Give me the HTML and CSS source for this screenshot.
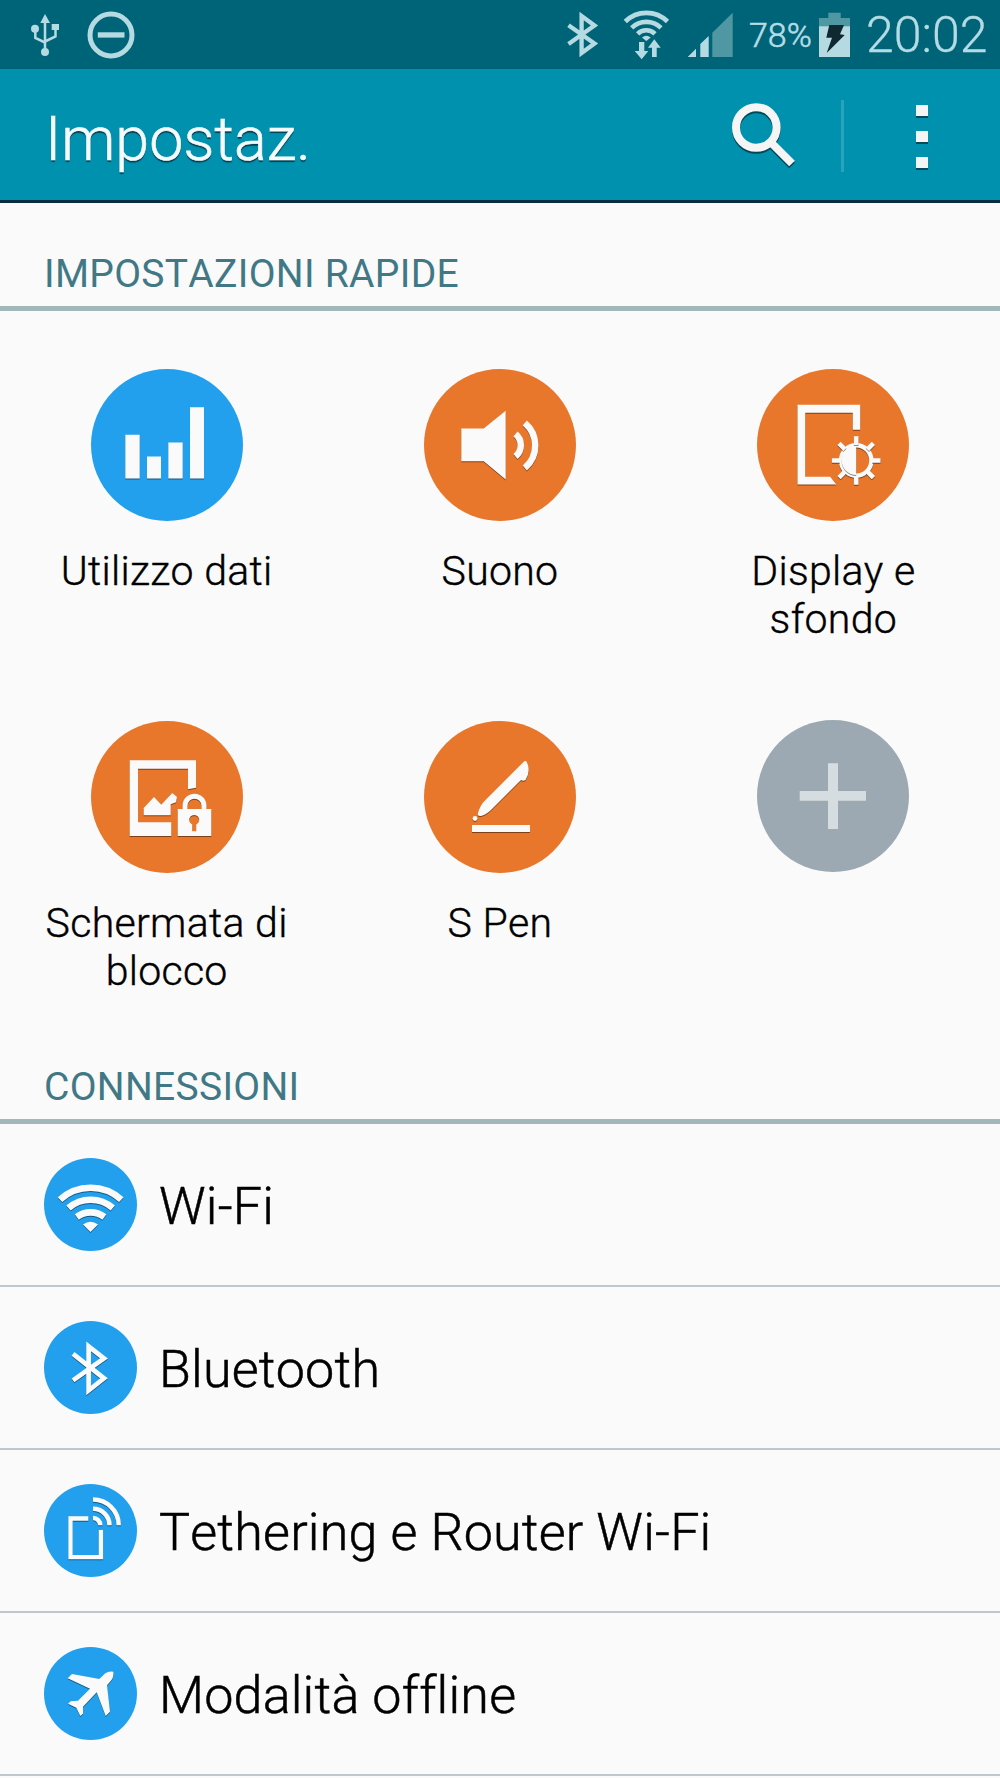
FILE: index.html
```html
<!DOCTYPE html>
<html lang="it">
<head>
    <meta charset="UTF-8">
    <meta name="viewport" content="width=device-width, initial-scale=1.0">
    <title>Impostazioni</title>
    <link rel="stylesheet" href="styles.css">
</head>
<body>
    <div class="status-bar">
        <svg class="usb" width="30" height="46" viewBox="30 12 30 46">
            <path d="M45 14L50 23H40.300z"/>
            <circle cx="45" cy="52" r="4"/>
            <circle cx="35" cy="28.700" r="4"/>
            <rect x="51.700" y="24" width="7.300" height="6"/>
            <path class="line" stroke-width="2.500" d="M45 22V50M35.300 29V38L45 42.500M55.500 29V36.500L45 41.500"/>
        </svg>
        <svg class="dnd" width="48" height="48" viewBox="87.500 10.500 48 48">
            <circle class="line" cx="111.500" cy="34.500" r="21" stroke-width="5"/>
            <rect x="98.300" y="31.800" width="26.700" height="5.300"/>
        </svg>
        <div class="status-right">
            <svg class="bt" width="34" height="48" viewBox="566 11 34 48">
                <path class="line" stroke-width="4.300" d="M568.500 25.300L594.500 43.500L581.600 53V16L594.500 25.500L568.500 44"/>
            </svg>
            <svg class="wifi" width="48" height="50" viewBox="622 9 48 50">
                <path class="line" stroke-width="4.600" d="M625.300 20.500A30 30 0 0 1 667.500 20.500M631.700 26.800A21 21 0 0 1 661 26.800M637.600 32.800A12.500 12.500 0 0 1 655 32.800"/>
                <path d="M642 36.500Q646.300 33 650.700 36.500L646.300 40z"/>
                <path d="M639 41H644.300V50H648.300L641.700 58.300L634.700 50H639z"/>
                <path d="M654.300 38.300L660.700 46.700H656.700V56H652V46.700H648z"/>
            </svg>
            <svg class="signal" width="46" height="46" viewBox="687 12 46 46">
                <path d="M687.700 57L696 48.700V57zM700.300 57V44L708.700 36V57z"/>
                <path class="dim" d="M712.300 57V32.700L732.700 12.700V57z"/>
            </svg>
            <span class="percent">78%</span>
            <svg class="battery" width="31" height="46" viewBox="819 11 31 46">
                <path class="dim" d="M819 17H828.300V11.700H840.700V17H850V26H819z"/>
                <rect x="819" y="25.300" width="31" height="30.700"/>
                <path class="bolt" d="M829.300 24H844L840 33.300L844.700 34L826.700 52L832 36.700H826.300z"/>
            </svg>
            <span class="clock">20:02</span>
        </div>
    </div>

    <div class="app-bar">
        <h1>Impostaz.</h1>
        <svg class="search" width="66" height="68" viewBox="731 103 66 68">
            <circle cx="756.300" cy="128.500" r="20.300"/>
            <path d="M772 144.500L792 164.500"/>
        </svg>
        <span class="separator"></span>
        <div class="menu"><i></i><i></i><i></i></div>
    </div>

    <h2>IMPOSTAZIONI RAPIDE</h2>
    <div class="quick">
        <div class="tile">
            <svg class="round blue" viewBox="0 0 152 152">
                <path d="M34.300 65.800H48.700V109.500H34.300zM56 87.500H70V109.500H56zM77.300 73.500H91.700V109.500H77.300zM99 38.200H113V109.500H99z"/>
            </svg>
            <p>Utilizzo dati</p>
        </div>
        <div class="tile">
            <svg class="round orange" viewBox="0 0 152 152">
                <path d="M37.300 59.500H59.700L81.700 41.800V110.500L59.700 92.200H37.300z"/>
                <path class="line" stroke-width="6.500" d="M91.500 65A14.600 14.600 0 0 1 91.500 87.500M100.800 54A29.500 29.500 0 0 1 100.800 99"/>
            </svg>
            <p>Suono</p>
        </div>
        <div class="tile">
            <svg class="round orange" viewBox="0 0 152 152">
                <path d="M40.500 35.800H103.200V60.800H95.800V43.800H48.200V107.800H73.200L79.200 115.500H40.500z"/>
                <circle class="line" cx="99.200" cy="91.500" r="15.200" stroke-width="4.400"/>
                <path d="M99.200 77A14.500 14.500 0 0 0 99.200 106z"/>
                <path class="line" stroke-width="4.600" d="M99.200 67.200V76M99.200 107V115.800M74.900 91.500H83M115 91.500H123.500M82 74.300L88 80.300M116.400 74.300L110.400 80.300M82 108.700L88 102.700M116.400 108.700L110.400 102.700"/>
            </svg>
            <p>Display e sfondo</p>
        </div>
        <div class="tile">
            <svg class="round orange" viewBox="0 0 152 152">
                <path d="M38.700 39.300H105V66.700L97 68.300V47.700H47V101.300H80.300V115H38.700z"/>
                <path d="M52.700 87L63 76L70.300 83.700L81.300 72L86 76L85 81.300L79.700 83.300V94.300H52.700z"/>
                <path class="line" stroke-width="5" d="M94 89V84.800A9.500 9.500 0 0 1 113 84.800V89"/>
                <path fill-rule="evenodd" d="M86.700 88H120.300V115H86.700zM101.200 103.500V110.300H105.200V103.500A5 5 0 1 0 101.200 103.500z"/>
            </svg>
            <p>Schermata di blocco</p>
        </div>
        <div class="tile">
            <svg class="round orange" viewBox="0 0 152 152">
                <path d="M53.700 93Q56 84 61.500 79L99.500 41Q101.500 38.800 103 41.500Q107 50 101.500 59Q99.500 60.500 97 59L69 87Q63 93.500 57 95Q53.500 95.500 53.700 93z"/>
                <circle cx="51" cy="97.500" r="2.400"/>
                <rect x="48" y="104" width="58" height="7"/>
            </svg>
            <p>S Pen</p>
        </div>
        <div class="tile">
            <svg class="round grey" viewBox="0 0 152 152">
                <path d="M71 43.300H81V71H109V80.700H81V109H71V80.700H42.700V71H71z"/>
            </svg>
        </div>
    </div>

    <h2>CONNESSIONI</h2>
    <ul class="list">
        <li>
            <svg class="round blue" viewBox="0 0 93 93">
                <path class="line" stroke-width="6.600" d="M16 41.600A45.500 45.500 0 0 1 77.300 41.600M24.500 50A34 34 0 0 1 68.800 50M32.800 59A23 23 0 0 1 60.400 59"/>
                <path d="M39 66.500Q46.500 61 54 66.500L46.500 74z"/>
            </svg>
            <span>Wi-Fi</span>
        </li>
        <li>
            <svg class="round blue" viewBox="0 0 93 93">
                <path class="line" stroke-width="4.700" d="M29 32.800L60 57.300L44.600 69.500V25.300L60 37.500L29 59.300"/>
            </svg>
            <span>Bluetooth</span>
        </li>
        <li>
            <svg class="round blue" viewBox="0 0 93 93">
                <path class="line" stroke-width="4.300" d="M44.300 34.500H26.500V73.100H56.900V46"/>
                <path class="line" stroke-width="4.500" d="M49 34A7.300 7.300 0 0 1 56.300 41.300M49 24.800A16.500 16.500 0 0 1 65.500 41.300M49 15.600A25.700 25.700 0 0 1 74.700 41.300"/>
            </svg>
            <span>Tethering e Router Wi-Fi</span>
        </li>
        <li>
            <svg class="round blue" viewBox="0 0 93 93">
                <path d="M69.300 24.700Q64.500 24 61 26.500L55.300 32L28 27L23.700 31.300L46 41.700L34 53.700L26.700 54.300L24 56.700L32.300 60.700L36.300 69L39 66.700V59.700L52.700 45.300L61.700 69L66 64.700L63 38.300L67.500 33Q70 29.500 69.300 24.700z"/>
            </svg>
            <span>Modalità offline</span>
        </li>
    </ul>
</body>
</html>
```
FILE: styles.css
```css
* { box-sizing: border-box; }
body {
    font-family: Roboto, sans-serif;
    font-weight: 300;
    font-kerning: none;
    font-variant-ligatures: none;
    margin: 0;
    padding: 0;
    background-color: #fafafa;
    color: #000;
}
h1, h2, p, ul { margin: 0; padding: 0; font-weight: 300; }
svg { display: block; flex: none; }
.line { fill: none; stroke: #fafafa; }

/* status bar */
.status-bar {
    display: flex;
    align-items: center;
    height: 69px;
    padding: 0 14px 0 30px;
    background: #006478;
    color: #b5dce4;
    fill: #b5dae1;
}
.status-bar .line { stroke: #b5dae1; }
.status-bar .dim { fill: #4f97a3; }
.status-bar .bolt { fill: #10282f; }
.dnd { margin-left: 27px; }
.status-right { display: flex; align-items: center; margin-left: auto; }
.wifi { margin-left: 22px; }
.signal { margin-left: 17px; }
.percent { width: 70px; margin-left: 16px; padding-top: 1px; font-size: 34px; white-space: nowrap; -webkit-text-stroke: 0.6px; }
.clock { width: 120px; margin-left: 16px; font-size: 50px; white-space: nowrap; -webkit-text-stroke: 0.3px; }

/* title bar */
.app-bar {
    display: flex;
    align-items: center;
    height: 134px;
    padding: 3px 72px 0 45px;
    background: #0091ae;
    border-bottom: 3px solid #062d42;
}
h1 {
    flex: 1;
    padding-top: 5px;
    font-size: 61px;
    color: #f5fbfc;
    text-shadow: 0 2px 1px rgba(0, 30, 40, 0.7);
    -webkit-text-stroke: 0.6px;
}
.search {
    fill: none;
    stroke: #f5f5f5;
    stroke-width: 8px;
    filter: drop-shadow(0 2px 0 rgba(0, 40, 50, 0.7));
}
.separator { width: 3px; height: 72px; margin-left: 44px; background: #2ba2bb; }
.menu { display: flex; flex-direction: column; gap: 15px; margin-left: 72px; }
.menu i { width: 12px; height: 11px; background: #f5f5f5; box-shadow: 0 2px 0 #07485a; }

h2 {
    height: 108px;
    padding: 47px 0 0 44px;
    border-bottom: 5px solid #a0b8ba;
    font-size: 39px;
    font-weight: 400;
    line-height: 48px;
    letter-spacing: 0.3px;
    color: #407985;
}

/* round icons */
.round { border-radius: 50%; fill: #fafafa; }
.round path, .round circle, .round rect { filter: drop-shadow(0 1px 0.5px rgba(0, 0, 0, 0.45)); }
.blue { background: #22a0ee; }
.orange { background: #e8762b; }
.grey { margin-top: -1px; background: #9ca9b2; fill: #d6dde0; }
.grey path { filter: none; }

/* quick settings */
.quick { display: grid; grid-template-columns: repeat(3, 1fr); grid-auto-rows: 352px; padding-top: 58px; height: 705px; }
.tile { display: flex; flex-direction: column; align-items: center; }
.tile .round { width: 152px; height: 152px; }
.tile p {
    width: 260px;
    margin-top: 26px;
    font-size: 41px;
    line-height: 48px;
    letter-spacing: 0.3px;
    text-align: center;
    -webkit-text-stroke: 0.4px;
}

/* connections */
.list { list-style: none; }
.list li {
    display: flex;
    align-items: center;
    height: 163px;
    padding-left: 44px;
    border-bottom: 2px solid #bfc7cd;
    font-size: 52px;
    letter-spacing: 0.2px;
    -webkit-text-stroke: 0.5px;
}
.list .round { width: 93px; height: 93px; }
.list span { margin-left: 22px; padding-top: 4px; white-space: nowrap; }
```
